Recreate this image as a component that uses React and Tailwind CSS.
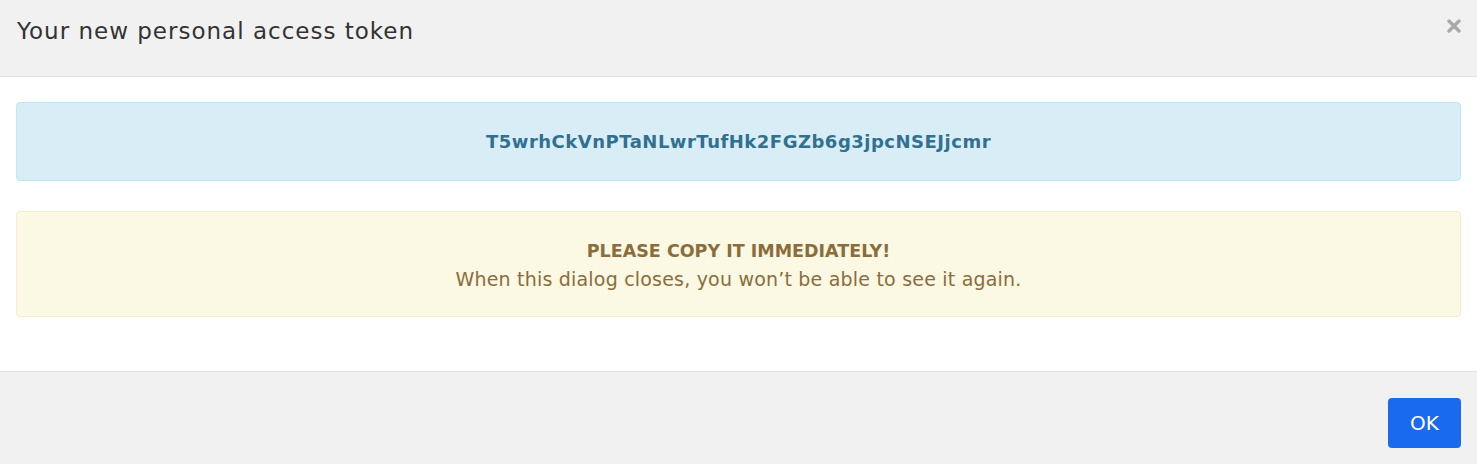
import React from 'react';

const App = () => {
  return (
    <div className="w-[1477px] h-[464px] bg-white flex flex-col" style={{ fontFamily: '"DejaVu Sans", "Liberation Sans", sans-serif' }}>
      {/* Header */}
      <div className="h-[77px] bg-[#f1f1f1] border-b border-[#e3e3e3] flex items-start justify-between pl-[17px] pr-[16px] pt-[16px]">
        <h2 className="text-[23px] leading-[30px] tracking-[1px] text-[#333] font-normal">Your new personal access token</h2>
        <button className="mt-[3px] text-[#a9a9a9]" aria-label="Close">
          <svg width="14" height="14" viewBox="0 0 14 14">
            <path d="M2 2 L12 12 M12 2 L2 12" stroke="currentColor" strokeWidth="3.4" strokeLinecap="round" />
          </svg>
        </button>
      </div>

      {/* Body */}
      <div className="flex-1 px-[16px] pt-[25px] flex flex-col gap-[30px]">
        <div className="h-[79px] bg-[#d9edf7] border border-[#bce8f1] rounded-[4px] flex items-center justify-center">
          <span className="text-[18px] tracking-[0.5px] font-bold text-[#31708f]">T5wrhCkVnPTaNLwrTufHk2FGZb6g3jpcNSEJjcmr</span>
        </div>
        <div className="h-[106px] bg-[#fbf8e4] border border-[#faebcc] rounded-[4px] flex flex-col items-center justify-center text-[#8a6d3b] leading-[28px] pt-[2px]">
          <span className="font-bold text-[17.5px]">PLEASE COPY IT IMMEDIATELY!</span>
          <span className="text-[19px] tracking-[0.2px]">When this dialog closes, you won’t be able to see it again.</span>
        </div>
      </div>

      {/* Footer */}
      <div className="h-[93px] bg-[#f1f1f1] border-t border-[#e3e3e3] flex items-start justify-end pr-[16px] pt-[26px]">
        <button className="w-[73px] h-[50px] bg-[#1a6aef] rounded-[4px] text-white text-[20px]">OK</button>
      </div>
    </div>
  );
};

export default App;
